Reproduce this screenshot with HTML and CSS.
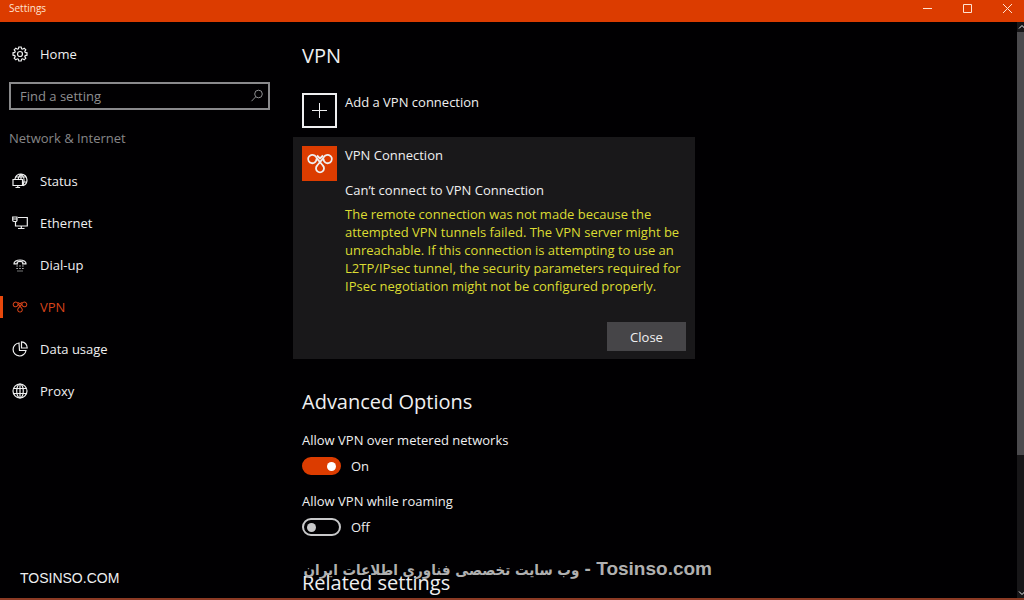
FILE: index.html
```html
<!DOCTYPE html>
<html lang="en">
<head>
<meta charset="UTF-8" />
<meta name="viewport" content="width=device-width, initial-scale=1" />
<title>Settings</title>
<link rel="stylesheet" href="styles.css">
</head>
<body>

<header class="titlebar">
  <span class="title">Settings</span>
  <div class="window-buttons">
    <button aria-label="Minimize"><svg width="11" height="11" viewBox="0 0 11 11"><path d="M1 5.5h9"/></svg></button>
    <button aria-label="Maximize"><svg width="11" height="11" viewBox="0 0 11 11"><path d="M1.5 1.5h8v8h-8z"/></svg></button>
    <button aria-label="Close window"><svg width="11" height="11" viewBox="0 0 11 11"><path d="M1 1l9 9M10 1l-9 9"/></svg></button>
  </div>
</header>

<div class="window">
  <nav class="sidebar">
    <a class="nav-item home" href="#home">
      <svg class="icon" viewBox="0 0 16 16"><path d="M6.8 1h2.4l.4 1.8 1 .4 1.6-1 1.6 1.6-1 1.6.4 1 1.8.4v2.4l-1.8.4-.4 1 1 1.6-1.6 1.6-1.6-1-1 .4-.4 1.8H6.8l-.4-1.8-1-.4-1.6 1-1.6-1.6 1-1.6-.4-1L1 9.2V6.8l1.8-.4.4-1-1-1.6 1.6-1.6 1.6 1 1-.4z"/><circle cx="8" cy="8" r="2.5"/></svg>
      Home
    </a>

    <div class="search">
      <input type="text" placeholder="Find a setting" aria-label="Find a setting">
      <svg width="14" height="14" viewBox="0 0 14 14"><circle cx="8.5" cy="5" r="3.8"/><path d="M5.7 7.8L1.5 12.2"/></svg>
    </div>

    <h2 class="group">Network &amp; Internet</h2>

    <a class="nav-item" href="#status">
      <svg class="icon" viewBox="0 0 16 16"><path d="M3 6C3.5 3 6 1 9 1c3.3 0 6 2.7 6 6 0 2.700-1.600 4.800-4 5.600M9 1v5M4 4h10M9 1C7.500 2.200 6.500 3.500 6.200 6.200M9 1c3.500 2.800 3.700 7.500 2 11M11 9h3.500M1 6.500h9.500v6H1zM5.800 12.500v2M3.500 14.500h4.600"/></svg>
      Status
    </a>
    <a class="nav-item" href="#ethernet">
      <svg class="icon" viewBox="0 0 16 16"><path d="M6 2.500h9.300v8.500H3.500V6.500M.7 2h4.300v3.300a1.200 1.200 0 0 1-1.200 1.200H1.900A1.200 1.200 0 0 1 .7 5.300zM.7 4h4.300M9.300 11v2.500M6 13.500h6.500"/></svg>
      Ethernet
    </a>
    <a class="nav-item" href="#dialup">
      <svg class="icon" viewBox="0 0 16 16"><path d="M2 6.800C1.500 1.700 14.500 1.700 14 6.800H10.700V5C9.200 4.300 6.800 4.300 5.300 5v1.800z"/><path class="dots" d="M4.500 9h1.200M7.400 9h1.200M10.300 9h1.200M4.500 11.500h1.200M7.400 11.500h1.200M10.300 11.500h1.200M5.500 14h1M7.500 14h1M9.500 14h1"/></svg>
      Dial-up
    </a>
    <a class="nav-item active" href="#vpn">
      <svg class="icon" viewBox="0 0 28 21"><use href="#vpn-mark"/></svg>
      VPN
    </a>
    <a class="nav-item" href="#data">
      <svg class="icon" viewBox="0 0 16 16"><path d="M7 2a6.500 6.500 0 1 0 7 7.500H7.500zM9.500.8A6 6 0 0 1 15.200 7H9.500z"/></svg>
      Data usage
    </a>
    <a class="nav-item" href="#proxy">
      <svg class="icon" viewBox="0 0 16 16"><circle cx="8" cy="8" r="7"/><ellipse cx="8" cy="8" rx="3.3" ry="7"/><path d="M8 1v14M1.700 5.500h12.600M1.700 10.500h12.600"/></svg>
      Proxy
    </a>
  </nav>

  <main class="content">
    <h1>VPN</h1>

    <button class="add">
      <span class="tile plus"><svg width="17" height="17" viewBox="0 0 17 17"><path d="M8.500 1v15M1 8.500h15"/></svg></span>
      <span>Add a VPN connection</span>
    </button>

    <section class="card">
      <span class="tile brand">
        <svg width="28" height="21" viewBox="0 0 28 21">
          <g id="vpn-mark">
            <path d="M10.500 5.800A4.200 4.200 0 1 1 8.600 2.500C10.500 3.700 11 6 14 9L16.800 12.500A4 4 0 1 1 11.200 12.500L14 9C17 6 17.500 3.700 19.400 2.500A4.200 4.200 0 1 1 17.500 5.800"/>
            <path d="M11 2.500L14 5.500 17 2.500"/>
          </g>
        </svg>
      </span>
      <div class="card-body">
        <h3>VPN Connection</h3>
        <p class="status">Can’t connect to VPN Connection</p>
        <p class="error">The remote connection was not made because the attempted VPN tunnels failed. The VPN server might be unreachable. If this connection is attempting to use an L2TP/IPsec tunnel, the security parameters required for IPsec negotiation might not be configured properly.</p>
      </div>
      <button class="close">Close</button>
    </section>

    <h2>Advanced Options</h2>
    <div class="option">
      <label for="metered">Allow VPN over metered networks</label>
      <div class="toggle">
        <input type="checkbox" role="switch" id="metered" checked>
        <span>On</span>
      </div>
    </div>
    <div class="option">
      <label for="roaming">Allow VPN while roaming</label>
      <div class="toggle">
        <input type="checkbox" role="switch" id="roaming">
        <span>Off</span>
      </div>
    </div>

    <h2 class="related">Related settings</h2>
  </main>

  <div class="scrollbar">
    <svg width="7" height="10" viewBox="0 0 7 10"><path d="M2 6.500l3-3 3 3"/></svg>
    <div class="track"><div class="thumb"></div></div>
    <svg width="7" height="10" viewBox="0 0 7 10"><path d="M2 3.500l3 3 3-3"/></svg>
  </div>
</div>

<div class="watermark-left">TOSINSO.COM</div>
<div class="watermark" dir="rtl" lang="fa"><bdi>Tosinso.com</bdi> - <span class="slogan">وب سایت تخصصی فناوری اطلاعات ایران</span></div>

</body>
</html>
```
FILE: styles.css
```css
* {
  box-sizing: border-box;
}

body {
  margin: 0;
  height: 100vh;
  display: flex;
  flex-direction: column;
  overflow: hidden;
  background: #010002;
  border-bottom: 2px solid #8c3a24;
  color: #efeff0;
  font-family: "Open Sans", "Noto Sans", sans-serif;
  font-size: 13px;
  line-height: 18px;
}

h1, h2, h3, p {
  margin: 0;
  font-weight: 400;
}

button, input {
  font: inherit;
  color: inherit;
}

button {
  border: none;
  background: none;
  padding: 0;
}

svg {
  fill: none;
  stroke: currentColor;
  stroke-width: 1;
  flex: none;
}

/* title bar */
.titlebar {
  display: flex;
  justify-content: space-between;
  height: 22px;
  flex: none;
  padding-left: 9px;
  background: #dc3c00;
  color: #ffe3d2;
}

.title {
  font-size: 10px;
  line-height: 16px;
}

.window-buttons {
  display: flex;
  padding-right: 1px;
}

.window-buttons button {
  width: 40px;
  height: 16px;
  display: flex;
  justify-content: center;
  align-items: center;
  padding-left: 8px;
}

.window {
  flex: 1;
  min-height: 0;
  display: grid;
  grid-template-columns: 280px 1fr 7px;
}

/* sidebar */
.sidebar {
  padding-top: 11px;
}

.nav-item {
  display: flex;
  align-items: center;
  gap: 12px;
  height: 42px;
  padding-left: 12px;
  color: inherit;
  text-decoration: none;
}

.icon {
  width: 16px;
  height: 16px;
  stroke-width: 1.2;
}

.nav-item.active {
  color: #d8431a;
  background: linear-gradient(#e8480c, #e8480c) left center / 3px 22px no-repeat;
}

.nav-item.active .icon {
  stroke-width: 1.8;
}

.search {
  display: flex;
  align-items: center;
  height: 28px;
  margin: 7px 10px 0 9px;
  padding: 0 4px 0 9px;
  border: 2px solid #8a8a8c;
  color: #8f8f91;
}

.search input {
  flex: 1;
  min-width: 0;
  padding: 0;
  border: none;
  outline: none;
  background: none;
}

.search input::placeholder {
  color: #8f8f91;
  opacity: 1;
}

.group {
  margin: 19px 0 13px 9px;
  color: #868688;
  font-size: 13px;
}

/* content */
.content {
  min-width: 0;
  padding: 20px 13px 0;
  overflow: hidden;
}

.content h1,
.content h2 {
  padding-left: 9px;
  font-size: 20px;
  line-height: 28px;
}

.add {
  display: flex;
  align-items: flex-start;
  gap: 8px;
  margin-top: 14px;
  padding: 9px;
}

.tile {
  display: flex;
  justify-content: center;
  align-items: center;
  width: 35px;
  height: 35px;
}

.plus {
  border: 2px solid #efeff0;
}

.brand {
  background: #dc3c00;
}

.brand svg {
  stroke-width: 1.8;
}

.card {
  display: grid;
  grid-template-columns: 35px 1fr;
  column-gap: 8px;
  max-width: 402px;
  padding: 9px 9px 8px;
  background: #19181a;
}

.card h3 {
  font-size: 13px;
}

.status {
  margin-top: 17px;
}

.error {
  margin-top: 6px;
  color: #dcdc32;
}

.close {
  grid-column: 2;
  justify-self: end;
  width: 79px;
  height: 29px;
  margin-top: 27px;
  background: #464548;
}

.content h2 {
  margin-top: 29px;
}

.option {
  padding: 15px 0 0 9px;
}

.option + .option {
  padding-top: 17px;
}

.option label {
  display: block;
}

.toggle {
  display: flex;
  align-items: center;
  gap: 10px;
  margin-top: 8px;
}

.toggle input {
  appearance: none;
  display: flex;
  align-items: center;
  width: 39px;
  height: 18px;
  margin: 0;
  padding: 0 3px;
  border: 2px solid #c8c8ca;
  border-radius: 9px;
}

.toggle input::before {
  content: "";
  width: 9px;
  height: 9px;
  border-radius: 50%;
  background: #c8c8ca;
}

.toggle input:checked {
  justify-content: flex-end;
  border-color: #dc3c00;
  background: #dc3c00;
}

.toggle input:checked::before {
  background: #fff;
}

.content .related {
  margin-top: 33px;
}

/* scrollbar */
.scrollbar {
  display: flex;
  flex-direction: column;
  background: #171618;
}

.track {
  flex: 1;
}

.thumb {
  height: 76%;
  background: #4b4a4d;
}

/* watermarks float over the window */
.watermark-left,
.watermark {
  position: absolute;
  font-family: "Liberation Sans", "DejaVu Sans", sans-serif;
  white-space: nowrap;
}

.watermark-left {
  left: 20px;
  bottom: 13px;
  font-size: 14px;
}

.watermark {
  right: 312px;
  bottom: 19px;
  color: #b0b0b0;
  font-size: 19px;
  line-height: 22px;
  font-weight: 700;
}

.slogan {
  font-family: "DejaVu Sans Condensed", "DejaVu Sans", sans-serif;
  font-size: 15px;
}
```
